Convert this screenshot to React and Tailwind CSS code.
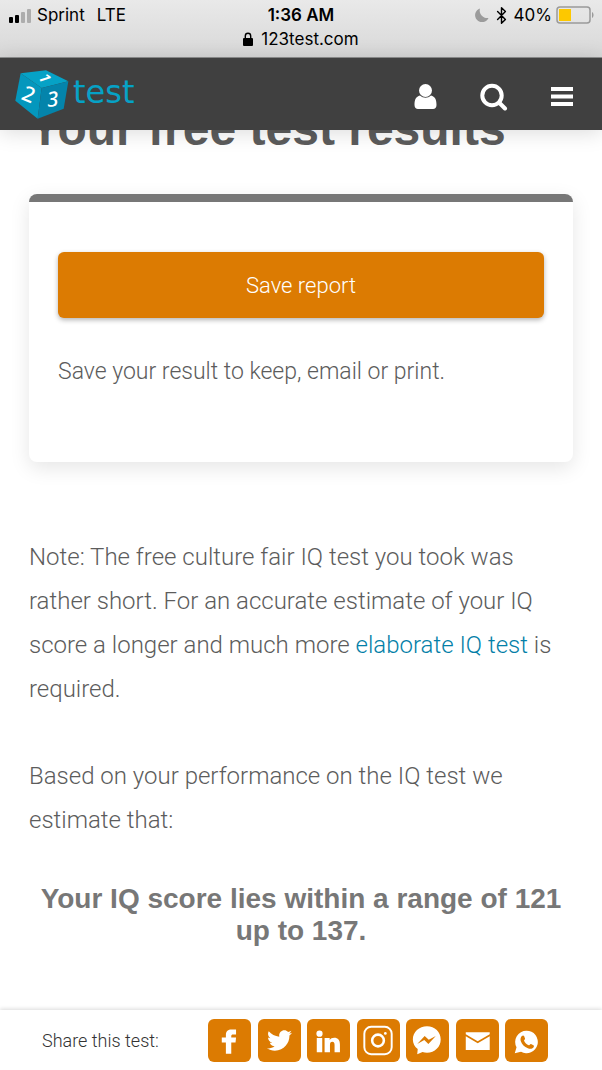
import React from 'react';
import { FiBluetooth } from 'react-icons/fi';
import { FaTwitter } from 'react-icons/fa';

const MailIcon = () => (
  <svg viewBox="0 0 44 44" className="size-full" fill="currentColor">
    <path d="M10 13.500h24.500v2.200L22.200 22.800 10 15.700z" />
    <path d="M10 17.600l12.200 7.200 12.300-7.200V31.800H10z" />
  </svg>
);

const MessengerIcon = () => (
  <svg viewBox="0 0 44 44" className="size-full">
    <path fill="#fff" d="M21.500 7.500c8 0 14 6 14 13.500s-6 13.500-14 13.500c-1.600 0-3.200-.3-4.600-.8L11.500 36l.5-5.200C9 28.500 7 25 7 21c0-7.500 6.500-13.500 14.500-13.500z" />
    <path fill="#dc7b02" d="M11.500 25.500l7.600-8.200 4.200 4 7.200-4-7.600 8.200-4.200-4z" />
  </svg>
);

const WhatsappIcon = () => (
  <svg viewBox="0 0 44 44" className="size-full">
    <path fill="#fff" d="M22 12a11.500 11.500 0 1 1-5.600 21.500L10 35l1.800-6A11.500 11.500 0 0 1 22 12z" />
    <path
      fill="#dc7b02"
      d="M17.300 17.300c.8-.8 1.800-.7 2.200.2l1 2.500c.3.800-1.200 1.700-1 2.300 1 2.200 2.500 3.600 4.800 4.600.7.200 1.500-1.700 2.300-1.300l2.500 1.300c.8.400.6 1.500 0 2.300-1.300 1.600-3.600 1.700-5.700.8-3.700-1.400-6-3.900-7.200-7.200-.7-2-.3-4.200 1.100-5.500z"
    />
  </svg>
);

const InstagramIcon = () => (
  <svg viewBox="0 0 44 44" className="size-full" fill="none" stroke="#fff" strokeWidth="2">
    <rect x="7.500" y="8" width="28" height="28" rx="7" />
    <circle cx="21.500" cy="22" r="6" strokeWidth="2.600" />
    <circle cx="29" cy="14.800" r="1.400" fill="#fff" stroke="none" />
  </svg>
);

const FacebookIcon = () => (
  <svg viewBox="0 0 44 44" className="size-full" fill="#fff">
    <path d="M18.300 35.500V24h-4.200v-5h4.200v-2.600c0-3.800 2.300-5.600 5.800-5.600h4.600v5h-3c-1.400 0-1.900.7-1.900 1.800V19h4.900l-.5 5h-4.400v11.500z" />
  </svg>
);

const LinkedinIcon = () => (
  <svg viewBox="0 0 44 44" className="size-full" fill="#fff">
    <circle cx="12.800" cy="15" r="3.200" />
    <path d="M10 19.500h5.600V34H10zM18 19.500h5.200v2c1-1.500 2.600-2.400 4.600-2.400 4 0 5.900 2.500 5.900 6.900v8h-5.500v-7.400c0-2.200-.7-3.200-2.300-3.200-1.700 0-2.400 1.200-2.400 3.200V34H18z" />
  </svg>
);

const TwitterIcon = () => (
  <span className="flex size-full items-center justify-center">
    <FaTwitter size={25} />
  </span>
);

const shareLinks = [
  { name: 'Facebook', Icon: FacebookIcon },
  { name: 'Twitter', Icon: TwitterIcon },
  { name: 'LinkedIn', Icon: LinkedinIcon },
  { name: 'Instagram', Icon: InstagramIcon },
  { name: 'Messenger', Icon: MessengerIcon },
  { name: 'Email', Icon: MailIcon },
  { name: 'WhatsApp', Icon: WhatsappIcon },
];

const CubeLogo = () => (
  <svg viewBox="44 41 162 147" width="54" height="49" fontFamily="'Noto Sans', sans-serif" fill="#fff">
    <path d="M61 51l76-9 67 33-80 20z" fill="#06a2c6" />
    <path d="M61 51l63 44-12 92-67-54z" fill="#0497bd" />
    <path d="M124 95l80-20-14 82-78 30z" fill="#0484ab" />
    <text x="134" y="82" fontSize="46" fontWeight="600" textAnchor="middle" transform="rotate(72 134 66)">1</text>
    <text x="84" y="136" fontSize="64" fontWeight="500" textAnchor="middle" transform="rotate(22 84 116)">2</text>
    <text x="157" y="150" fontSize="62" fontWeight="500" fontStyle="italic" textAnchor="middle" transform="rotate(-6 157 129)">3</text>
  </svg>
);

const StatusBar = () => (
  <div className="h-[58px] border-b border-[#8f9090] bg-linear-to-b from-[#e9e9e9] to-[#d8d8d8] pt-[3px] font-['Inter',sans-serif] text-[17px] leading-6 font-normal text-black">
    <div className="grid grid-cols-3 items-center px-2">
      <div className="flex items-center gap-1">
        <svg width="25" height="15" viewBox="0 0 25 15">
          <rect x="1" y="9" width="4" height="6" rx="1" />
          <rect x="7" y="7" width="4" height="8" rx="1" />
          <rect x="13" y="4" width="4" height="11" rx="1" fill="#adadad" />
          <rect x="19" y="1" width="4" height="14" rx="1" fill="#adadad" />
        </svg>
        <span>Sprint</span>
        <span className="ml-2">LTE</span>
      </div>
      <span className="text-center font-semibold">1:36 AM</span>
      <div className="flex items-center justify-end">
        <svg width="14" height="14" viewBox="0 0 14 14" fill="#9b9b9b">
          <path d="M5 .5A7 7 0 1 0 13.500 10 7.500 7.500 0 0 1 5 .5z" />
        </svg>
        <FiBluetooth size={17} strokeWidth={2} className="mx-1" />
        <span>40%</span>
        <svg width="38" height="18" viewBox="0 0 38 18" className="ml-1">
          <rect x="1" y="1" width="33" height="16" rx="3" fill="none" stroke="#9a9a9a" strokeWidth="1.500" />
          <rect x="3" y="3" width="12" height="12" fill="#fdc800" />
          <path d="M36 6c2 1 2 5 0 6z" fill="#9a9a9a" />
        </svg>
      </div>
    </div>
    <div className="flex items-center justify-center gap-2">
      <svg width="10" height="14" viewBox="0 0 10 14">
        <rect y="6" width="10" height="8" rx="1" />
        <path d="M2.300 7V4a2.700 2.700 0 0 1 5.400 0v3" fill="none" stroke="#000" strokeWidth="1.400" />
      </svg>
      <span>123test.com</span>
    </div>
  </div>
);

const Header = () => (
  <header className="relative z-10 flex h-[72px] items-center justify-between bg-[#404040] pl-[15px] pr-7 text-white shadow-[0_2px_20px_rgba(0,0,0,0.15)]">
    <a href="#home" className="flex items-center gap-1">
      <CubeLogo />
      <span className="pb-1 font-['DejaVu_Sans',sans-serif] text-[32px] leading-10 font-normal text-[#06a2c6]">test</span>
    </a>
    <nav className="flex items-center gap-[42px] pt-1.5">
      <button aria-label="Account">
        <svg width="24" height="28" viewBox="0 0 24 28" fill="currentColor">
          <circle cx="11.500" cy="7.500" r="6.500" />
          <path d="M6 12.500c3.500 3 7.500 3 11 0 4 1 5.500 4 5.500 9.500 0 2.500-1.500 4-3.500 4H4c-2 0-3.500-1.500-3.500-4C.5 16.500 2 13.500 6 12.500z" />
        </svg>
      </button>
      <button aria-label="Search">
        <svg width="28" height="28" viewBox="0 0 28 28" fill="none" stroke="currentColor">
          <circle cx="12" cy="12.500" r="9.700" strokeWidth="4" />
          <path d="M19.500 20l5.500 5.500" strokeWidth="4" strokeLinecap="round" />
        </svg>
      </button>
      <button aria-label="Menu">
        <svg width="24" height="28" viewBox="0 0 24 28" fill="currentColor">
          <path d="M1 4h22v4H1zM1 11.500h22v4H1zM1 19h22v4H1z" />
        </svg>
      </button>
    </nav>
  </header>
);

const App = () => {
  return (
    <div className="flex min-h-screen flex-col bg-white font-['Roboto','Liberation_Sans',sans-serif] font-light text-[#5c5c5c]">
      <StatusBar />
      <Header />

      {/* the title is scrolled partly under the header */}
      <main className="-mt-[29px] grow px-[29px]">
        <h1 className="font-['Liberation_Sans',sans-serif] text-[48px] leading-[56px] font-bold">Your free test results</h1>

        <section className="mt-[37px] rounded-lg border-t-8 border-[#777777] px-[29px] pt-[50px] pb-[68px] shadow-[0_6px_20px_rgba(0,0,0,0.1)]">
          <button className="h-[66px] w-full rounded-md bg-[#dc7b02] text-[22px] text-white shadow-[0_2px_5px_rgba(0,0,0,0.3)]">
            Save report
          </button>
          <p className="mt-8 text-[23px] leading-[44px]">Save your result to keep, email or print.</p>
        </section>

        <p className="mt-[73px] text-[24px] leading-[44px]">
          Note: The free culture fair IQ test you took was rather short. For an accurate estimate of your IQ score a longer and much more{' '}
          <a href="#iq-test" className="text-[#047fa8]">elaborate IQ test</a> is required.
        </p>
        <p className="mt-[43px] text-[24px] leading-[44px]">Based on your performance on the IQ test we estimate that:</p>

        <h2 className="mt-[41px] px-2 text-center font-['Liberation_Sans',sans-serif] text-[28px] leading-8 font-bold text-[#777777]">
          Your IQ score lies within a range of 121 up to 137.
        </h2>
      </main>

      <footer className="flex h-[60px] items-center justify-between pl-[42px] pr-[54px] shadow-[0_-1px_4px_rgba(0,0,0,0.15)]">
        <span className="text-[18px] text-[#333333]">Share this test:</span>
        <div className="flex w-[340px] justify-between">
          {shareLinks.map(({ name, Icon }) => (
            <a key={name} href="#share" aria-label={name} className="size-[43px] rounded-md bg-[#dc7b02] text-white">
              <Icon />
            </a>
          ))}
        </div>
      </footer>
    </div>
  );
};

export default App;
